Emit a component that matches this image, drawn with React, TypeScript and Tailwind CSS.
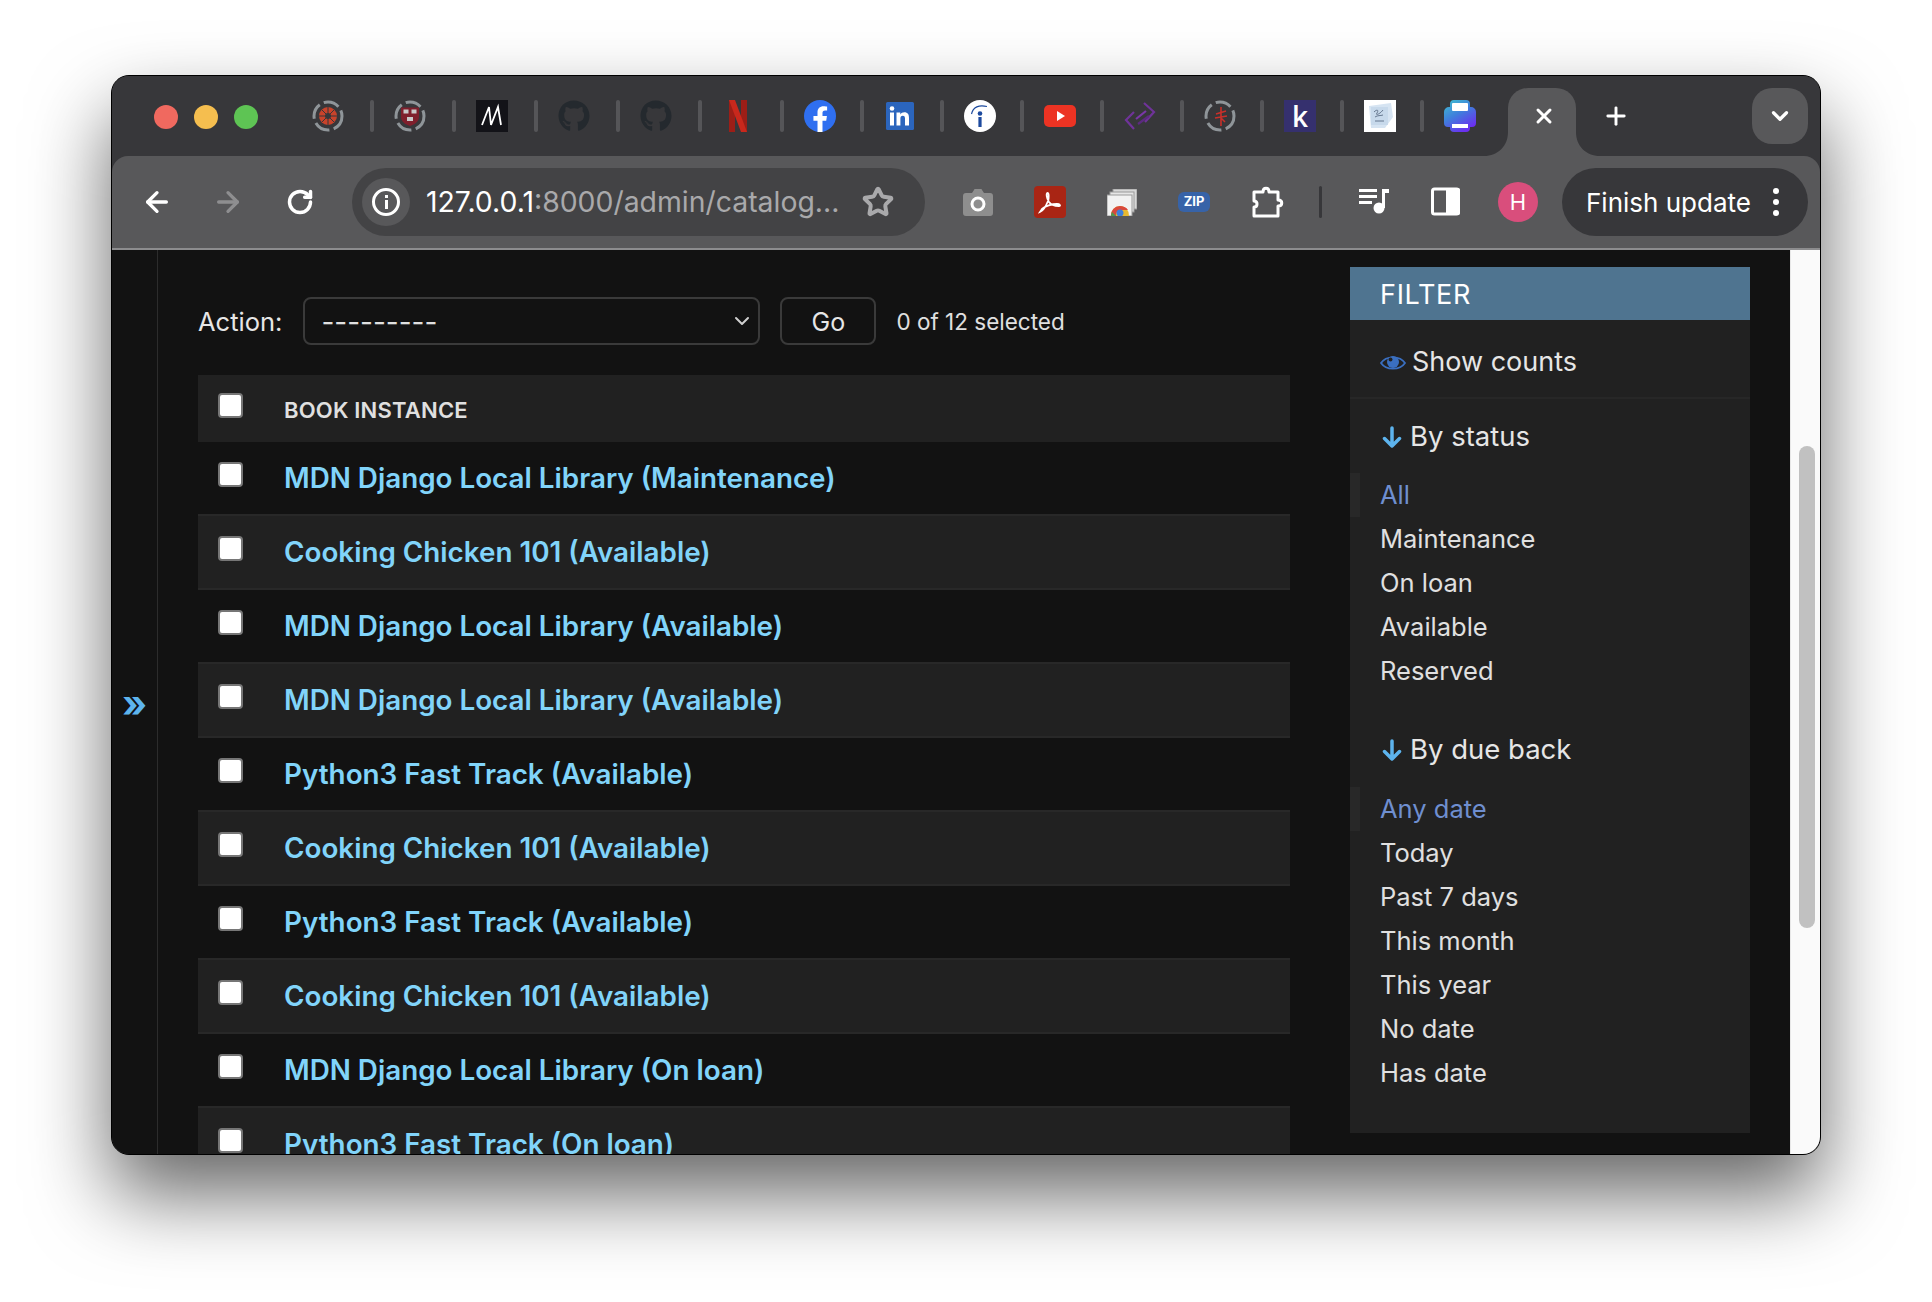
import { ArrowLeft, ArrowRight, ChevronDown, Plus, RotateCw, Star, X } from 'lucide-react';
import { FaGithub } from 'react-icons/fa';

const rows = [
  'MDN Django Local Library (Maintenance)',
  'Cooking Chicken 101 (Available)',
  'MDN Django Local Library (Available)',
  'MDN Django Local Library (Available)',
  'Python3 Fast Track (Available)',
  'Cooking Chicken 101 (Available)',
  'Python3 Fast Track (Available)',
  'Cooking Chicken 101 (Available)',
  'MDN Django Local Library (On loan)',
  'Python3 Fast Track (On loan)',
];

const statusFilters = ['All', 'Maintenance', 'On loan', 'Available', 'Reserved'];
const dueFilters = ['Any date', 'Today', 'Past 7 days', 'This month', 'This year', 'No date', 'Has date'];

function DashedRing() {
  return <circle cx="16" cy="16" r="14" fill="none" stroke="#8f9599" strokeWidth="3" strokeDasharray="16 4.4" />;
}

function CanvasIcon() {
  return (
    <svg width="32" height="32" viewBox="0 0 32 32">
      <DashedRing />
      <circle cx="16" cy="16" r="9" fill="#c8432b" />
      <circle cx="16" cy="16" r="3" fill="#37373a" />
      <path d="M16 7v18M7 16h18M9.6 9.6l12.8 12.8M22.4 9.6L9.6 22.4" stroke="#37373a" strokeWidth="1" />
    </svg>
  );
}

function HarvardIcon() {
  return (
    <svg width="32" height="32" viewBox="0 0 32 32">
      <DashedRing />
      <path d="M7 7.500h18v9c0 5-4 8-9 9.500-5-1.500-9-4.500-9-9.500z" fill="#7f1f2c" />
      <rect x="9.500" y="9.500" width="5" height="4" fill="#c9c9c9" />
      <rect x="17.500" y="9.500" width="5" height="4" fill="#c9c9c9" />
      <rect x="13" y="17" width="6" height="4" fill="#c9c9c9" />
    </svg>
  );
}

function MediumIcon() {
  return (
    <svg width="32" height="32" viewBox="0 0 32 32">
      <rect width="32" height="32" fill="#131318" />
      <path d="M6 25L13 7 15 25 22 7 25 25" fill="none" stroke="#fff" strokeWidth="1.800" />
    </svg>
  );
}

function NetflixIcon() {
  return (
    <svg width="32" height="32" viewBox="0 0 32 32">
      <path d="M7 0h6v32l-6 0z" fill="#9c1e17" />
      <path d="M19 0h6v32h-6z" fill="#9c1e17" />
      <path d="M7 0h6l12 32h-6z" fill="#c9281c" />
    </svg>
  );
}

function FacebookIcon() {
  return (
    <svg width="32" height="32" viewBox="0 0 24 24">
      <circle cx="12" cy="12" r="12" fill="#2f6ff0" />
      <path d="M16.670 15.560l.53-3.490h-3.330V9.810c0-.96.470-1.890 1.960-1.890h1.510V4.950s-1.380-.24-2.690-.24c-2.740 0-4.530 1.670-4.530 4.690v2.670H7.080v3.490h3.050V24h3.740v-8.440z" fill="#fff" />
    </svg>
  );
}

function LinkedinIcon() {
  return (
    <svg width="32" height="32" viewBox="0 0 32 32">
      <rect x="2" y="2" width="28" height="28" rx="1.500" fill="#2b65bd" />
      <rect x="6" y="12.500" width="4" height="13" fill="#fff" />
      <circle cx="8" cy="8.500" r="2.300" fill="#fff" />
      <path d="M12.500 12.500h3.800v2c.8-1.500 2.300-2.300 4-2.300 3.500 0 4.700 2.200 4.700 5.600v7.700h-4v-6.800c0-1.700-.5-2.900-2.200-2.900-1.800 0-2.400 1.300-2.400 3v6.700h-3.900z" fill="#fff" />
    </svg>
  );
}

function InfoLogoIcon() {
  return (
    <svg width="32" height="32" viewBox="0 0 32 32">
      <circle cx="16" cy="16" r="16" fill="#fff" />
      <circle cx="16" cy="13.500" r="2.300" fill="#1d4a9e" />
      <rect x="14.400" y="17" width="3.200" height="10" fill="#1d4a9e" />
      <path d="M7.500 14C9 7 15 4.500 23 6.500" fill="none" stroke="#1d4a9e" strokeWidth="1.200" />
    </svg>
  );
}

function YoutubeIcon() {
  return (
    <svg width="32" height="32" viewBox="0 0 32 32">
      <rect y="5" width="32" height="22" rx="5" fill="#ec3323" />
      <path d="M13 11l8 5-8 5z" fill="#fff" />
    </svg>
  );
}

function ArrowsIcon() {
  return (
    <svg width="32" height="32" viewBox="0 0 32 32" fill="none" stroke="#6f3399" strokeWidth="2.200">
      <path d="M10 12l-8 8 8 9" />
      <path d="M20 3l10 9-9 10" />
      <path d="M12 19l10-8" stroke="#7a37a8" />
      <path d="M14 24l11-8" stroke="#5c2a80" />
    </svg>
  );
}

function CardIcon() {
  return (
    <svg width="32" height="32" viewBox="0 0 32 32">
      <DashedRing />
      <path d="M17 7v19M12 14l10-3M11 18l12-2M17 18l4 4" fill="none" stroke="#c8302a" strokeWidth="1.600" />
    </svg>
  );
}

function SketchIcon() {
  return (
    <svg width="32" height="32" viewBox="0 0 32 32">
      <rect width="32" height="32" fill="#fff" />
      <path d="M5 6l22-3 2 14-8 11H7z" fill="#d6e4f2" />
      <rect x="7" y="7" width="17" height="18" fill="#c3d6e8" opacity="0.800" />
      <path d="M10 12c3-3 5-2 3 1s3 1 6-3M11 17c3-2 5-1 8-2M11 21h9" fill="none" stroke="#4e5f78" strokeWidth="0.800" />
    </svg>
  );
}

function PrinterIcon() {
  return (
    <svg width="32" height="32" viewBox="0 0 32 32">
      <defs>
        <linearGradient id="printerFill" x1="0" y1="0" x2="0.600" y2="1">
          <stop offset="0" stopColor="#3fc3cf" />
          <stop offset="0.500" stopColor="#3f7fdc" />
          <stop offset="1" stopColor="#6b2ff0" />
        </linearGradient>
      </defs>
      <path d="M6 4a4 4 0 0 1 4-4h12a4 4 0 0 1 4 4v3h1a5 5 0 0 1 5 5v11a4 4 0 0 1-4 4h-2v1a4 4 0 0 1-4 4H10a4 4 0 0 1-4-4v-1H4a4 4 0 0 1-4-4V12a5 5 0 0 1 5-5h1z" fill="url(#printerFill)" />
      <rect x="8" y="3" width="16" height="8" rx="1" fill="#fff" />
      <rect x="8" y="24" width="16" height="4" fill="#fff" />
    </svg>
  );
}

function CameraIcon() {
  return (
    <svg width="30" height="27" viewBox="0 0 30 27">
      <path d="M9 4l2-3a1 1 0 0 1 1-1h6a1 1 0 0 1 1 1l2 3h6a3 3 0 0 1 3 3v17a3 3 0 0 1-3 3H3a3 3 0 0 1-3-3V7a3 3 0 0 1 3-3z" fill="#8e8e8e" />
      <circle cx="15" cy="15" r="6" fill="none" stroke="#fff" strokeWidth="3" />
    </svg>
  );
}

function PdfIcon() {
  return (
    <svg width="32" height="32" viewBox="0 0 32 32">
      <rect width="32" height="32" rx="4" fill="#a92514" />
      <path d="M6 26c3-1 6-6 8-11 1-3 1-8-.5-8s-1 5 1.500 9c2 3 6 4 10 4 2 0 1-2-2-2-5 0-12 2-15 5z" fill="none" stroke="#fff" strokeWidth="1.800" />
    </svg>
  );
}

function WebStoreIcon() {
  return (
    <svg width="30" height="27" viewBox="0 0 30 27">
      <rect x="6" y="0" width="24" height="20" fill="#d8d8d8" stroke="#9a9a9a" />
      <rect x="3" y="3" width="24" height="20" fill="#e6e6e6" stroke="#9a9a9a" />
      <rect x="0" y="6" width="25" height="21" fill="#f2f2f2" stroke="#9a9a9a" />
      <path d="M4 27a9 9 0 0 1 9-10 9 9 0 0 1 9 10z" fill="#e8b930" />
      <path d="M4 27a9 9 0 0 1 9-10c3 0 6 1 8 4h-8a5 5 0 0 0-4 6z" fill="#d9483b" />
      <path d="M4 27a9 9 0 0 1 1-4l4 4z" fill="#4d9a4f" />
      <circle cx="13" cy="24" r="3.500" fill="#3f7fdc" />
    </svg>
  );
}

function PuzzleIcon() {
  return (
    <svg width="32" height="34" viewBox="0 0 32 34" fill="none" stroke="#fff" strokeWidth="3" strokeLinejoin="round">
      <path d="M2 8h9c0-5 6-5 6 0h9v8c5 0 5 6 0 6v10H2v-9c4 0 4-6 0-6z" />
    </svg>
  );
}

function QueueIcon() {
  return (
    <svg width="30" height="28" viewBox="0 0 30 28" fill="#fff">
      <rect y="1" width="18" height="3" />
      <rect y="7" width="18" height="3" />
      <rect y="13" width="13" height="3" />
      <rect x="23" y="1" width="3" height="19" />
      <rect x="23" y="1" width="7" height="4" />
      <circle cx="20" cy="20" r="5.500" />
    </svg>
  );
}

function SidePanelIcon() {
  return (
    <svg width="30" height="29" viewBox="0 0 30 29">
      <rect x="2.500" y="2" width="26" height="25" rx="2" fill="none" stroke="#fff" strokeWidth="3" />
      <rect x="16" y="1" width="14" height="27" rx="2" fill="#fff" />
    </svg>
  );
}

function EyeIcon() {
  return (
    <svg width="26" height="18" viewBox="0 0 26 18">
      <path d="M1 9C6 1.500 20 1.500 25 9 20 16.500 6 16.500 1 9z" fill="none" stroke="#3a6fc0" strokeWidth="1.800" />
      <circle cx="13" cy="8" r="6" fill="#3a6fc0" />
      <circle cx="10.500" cy="5.500" r="2" fill="#212121" />
    </svg>
  );
}

function DownArrow() {
  return (
    <svg width="20" height="22" viewBox="0 0 20 22" fill="none" stroke="#5db4ee" strokeWidth="3.500" strokeLinecap="round" strokeLinejoin="round">
      <path d="M10 2v18M2.500 12.500L10 20l7.500-7.500" />
    </svg>
  );
}

function Flare({ side }: { side: 'left' | 'right' }) {
  return (
    <svg
      width="24"
      height="24"
      viewBox="0 0 24 24"
      className={side === 'left' ? 'absolute bottom-0 -left-[24px]' : 'absolute bottom-0 -right-[24px] -scale-x-100'}
    >
      <path d="M24 0v24H0C14 24 24 14 24 0z" fill="#58585a" />
    </svg>
  );
}

function TabFavicon({ children, spaced }: { children: React.ReactNode; spaced: string }) {
  return (
    <div className={`flex items-center ${spaced}`}>
      <div className="w-8 h-8 flex items-center justify-center">{children}</div>
      <div className="ml-auto w-1 h-8 rounded-sm bg-[#555558]" />
    </div>
  );
}

function TabStrip() {
  return (
    <div className="h-[80px] flex items-start bg-[#37373a] pl-[42px]">
      <div className="flex gap-4 mt-[29px]">
        <div className="w-6 h-6 rounded-full bg-[#f0695f]" />
        <div className="w-6 h-6 rounded-full bg-[#f5be4f]" />
        <div className="w-6 h-6 rounded-full bg-[#5ec454]" />
      </div>
      <div className="flex items-center ml-[54px] mt-6">
        <TabFavicon spaced="w-[62px] mr-5"><CanvasIcon /></TabFavicon>
        <TabFavicon spaced="w-[62px] mr-5"><HarvardIcon /></TabFavicon>
        <TabFavicon spaced="w-[62px] mr-5"><MediumIcon /></TabFavicon>
        <TabFavicon spaced="w-[62px] mr-5"><FaGithub size={32} color="#24292e" /></TabFavicon>
        <TabFavicon spaced="w-[62px] mr-5"><FaGithub size={32} color="#24292e" /></TabFavicon>
        <TabFavicon spaced="w-[62px] mr-5"><NetflixIcon /></TabFavicon>
        <TabFavicon spaced="w-[60px] mr-5"><FacebookIcon /></TabFavicon>
        <TabFavicon spaced="w-[60px] mr-5"><LinkedinIcon /></TabFavicon>
        <TabFavicon spaced="w-[60px] mr-5"><InfoLogoIcon /></TabFavicon>
        <TabFavicon spaced="w-[60px] mr-5"><YoutubeIcon /></TabFavicon>
        <TabFavicon spaced="w-[60px] mr-5"><ArrowsIcon /></TabFavicon>
        <TabFavicon spaced="w-[60px] mr-5"><CardIcon /></TabFavicon>
        <TabFavicon spaced="w-[60px] mr-5">
          <div className="w-8 h-8 bg-[#35306e] flex items-center justify-center text-white text-[28px] font-semibold font-['Open_Sans',sans-serif]">k</div>
        </TabFavicon>
        <TabFavicon spaced="w-[60px] mr-5"><SketchIcon /></TabFavicon>
        <div className="w-8 h-8"><PrinterIcon /></div>
      </div>
      <div className="relative w-[68px] h-[68px] mt-3 ml-8 bg-[#58585a] rounded-t-[20px] flex items-center justify-center pb-3 pl-[3px]">
        <Flare side="left" />
        <Flare side="right" />
        <X size={24} color="#fff" strokeWidth={3} />
      </div>
      <Plus size={28} color="#fff" strokeWidth={2.5} className="ml-[26px] mt-[26px]" />
      <div className="w-14 h-14 mt-3 ml-[122px] rounded-[20px] bg-[#58585a] flex items-center justify-center">
        <ChevronDown size={26} color="#fff" strokeWidth={3} />
      </div>
    </div>
  );
}

function Toolbar() {
  return (
    <div className="h-[94px] flex items-start pt-3 pl-[29px] bg-[#58585a] rounded-t-[16px] border-b-2 border-[#8c8c8e]">
      <ArrowLeft size={32} color="#fff" strokeWidth={2.500} className="mt-[18px]" />
      <ArrowRight size={32} color="#8e8e90" strokeWidth={2.500} className="mt-[18px] ml-[39px]" />
      <RotateCw size={28} color="#fff" strokeWidth={3} className="mt-5 ml-[42px]" />
      <div className="w-[573px] h-[68px] ml-[38px] rounded-full bg-[#434345] flex items-center pl-[10px]">
        <div className="w-12 h-12 rounded-full bg-[#58585a] flex items-center justify-center">
          <div className="relative w-7 h-7 rounded-full border-[3px] border-white flex flex-col items-center justify-center gap-[2px]">
            <div className="w-[3px] h-[3px] bg-white" />
            <div className="w-[3px] h-[9px] bg-white" />
          </div>
        </div>
        <div className="ml-[16px] w-[413px] text-[28.4px] leading-none whitespace-nowrap font-['Inter',sans-serif] text-[#a9a9ab]">
          <span className="text-white">127.0.0.1</span>:8000/admin/catalog...
        </div>
        <Star size={32} color="#a9a9ab" strokeWidth={3} className="ml-[23px]" />
      </div>
      <div className="mt-[21px] ml-[38px]"><CameraIcon /></div>
      <div className="mt-[18px] ml-[41px]"><PdfIcon /></div>
      <div className="mt-[21px] ml-[41px]"><WebStoreIcon /></div>
      <div className="mt-6 ml-[41px] w-8 h-5 rounded-md bg-[#3763a8] flex items-center justify-center text-white text-[13px] font-bold font-['Inter',sans-serif]">ZIP</div>
      <div className="mt-4 ml-[42px]"><PuzzleIcon /></div>
      <div className="mt-[18px] ml-[35px] w-[3px] h-8 rounded-sm bg-[#37373a]" />
      <div className="mt-5 ml-[37px]"><QueueIcon /></div>
      <div className="mt-[19px] ml-[41px]"><SidePanelIcon /></div>
      <div className="mt-[14px] ml-[38px] w-10 h-10 rounded-full bg-[#d94e7c] flex items-center justify-center text-white text-[22px] font-['Inter',sans-serif]">H</div>
      <div className="w-[246px] h-[68px] ml-6 rounded-full bg-[#37373a] flex items-center pl-[24px] text-white text-[26px] font-['Inter',sans-serif] whitespace-nowrap">
        Finish update
        <div className="ml-[22px] flex flex-col gap-[5px]">
          <div className="w-[6px] h-[6px] rounded-full bg-white" />
          <div className="w-[6px] h-[6px] rounded-full bg-white" />
          <div className="w-[6px] h-[6px] rounded-full bg-white" />
        </div>
      </div>
    </div>
  );
}

function ChangeList() {
  return (
    <div className="w-[1092px] ml-10 shrink-0">
      <div className="flex items-start h-[48px] mt-[47px]">
        <span className="text-[25.5px] leading-[50px] text-[#e6e6e6]">Action:</span>
        <div className="relative w-[457px] h-[48px] ml-[21px] border-2 border-[#3a3a3a] rounded-lg pl-[16px] text-[28px] leading-[46px] text-[#e0e0e0]">
          ---------
          <ChevronDown size={24} color="#cfcfcf" strokeWidth={2} className="absolute right-[4px] top-[10px]" />
        </div>
        <div className="w-[96px] h-[48px] ml-5 border-2 border-[#3a3a3a] rounded-lg text-center text-[25px] leading-[46px] text-[#e6e6e6]">Go</div>
        <span className="ml-5 text-[22.500px] leading-[50px] text-[#e0e0e0]">0 of 12 selected</span>
      </div>
      <div className="mt-[30px]">
        <div className="h-[67px] bg-[#212121] flex items-start pl-5 pt-[18px]">
          <input type="checkbox" className="appearance-none w-[25px] h-[25px] bg-white border-2 border-[#767676] rounded-[4px]" />
          <span className="ml-[41px] mt-[1px] text-[22px] tracking-[0.200px] font-semibold text-[#e0e0e0]">BOOK INSTANCE</span>
        </div>
        {rows.map((title, i) => (
          <div
            key={i}
            className={`flex items-start pl-5 ${i === 0 ? 'h-[72px] pt-5' : 'h-[74px] pt-[20px] border-t-2 border-[#282828]'} ${i % 2 === 1 ? 'bg-[#212121]' : 'bg-[#121212]'}`}
          >
            <input type="checkbox" className="appearance-none w-[25px] h-[25px] bg-white border-2 border-[#767676] rounded-[4px]" />
            <span className="ml-[41px] text-[27.800px] leading-[32px] font-semibold text-[#81d4fa] whitespace-nowrap">{title}</span>
          </div>
        ))}
      </div>
    </div>
  );
}

function FilterGroup({ title, items, listGap }: { title: string; items: string[]; listGap: string }) {
  return (
    <div>
      <div className="flex items-center h-9 pl-[32px]">
        <DownArrow />
        <span className="ml-[8px] text-[27.500px] text-[#e6e6e6]">{title}</span>
      </div>
      <ul className={listGap}>
        {items.map((item, i) => (
          <li key={item} className={`h-[44px] flex items-center text-[25.500px] ${i === 0 ? 'text-[#6f8fd0] border-l-[10px] border-[#282828] pl-[20px]' : 'pl-[30px] text-[#e0e0e0]'}`}>
            {item}
          </li>
        ))}
      </ul>
    </div>
  );
}

function FilterPanel() {
  return (
    <div className="w-[400px] h-[866px] ml-[60px] mt-[17px] shrink-0 bg-[#212121]">
      <div className="h-[53px] bg-[#4f7490] flex items-center pl-[30px] pt-[3px] text-[27px] text-white tracking-[0.700px]">FILTER</div>
      <div className="h-[79px] flex items-center pl-[30px] pt-[8px] border-b-2 border-[#272727]">
        <EyeIcon />
        <span className="ml-[6px] text-[27px] text-[#e6e6e6]">Show counts</span>
      </div>
      <div className="mt-5">
        <FilterGroup title="By status" items={statusFilters} listGap="mt-[18px]" />
      </div>
      <div className="mt-[39px]">
        <FilterGroup title="By due back" items={dueFilters} listGap="mt-[19px]" />
      </div>
    </div>
  );
}

export default function App() {
  return (
    <div className="w-[1932px] h-[1302px] overflow-hidden bg-white pl-[111px] pt-[75px] font-['Inter',sans-serif]">
      <div className="w-[1710px] h-[1080px] rounded-[18px] border border-black overflow-hidden flex flex-col bg-[#37373a] shadow-[0_40px_80px_rgba(0,0,0,0.6)]">
        <TabStrip />
        <Toolbar />
        <div className="flex-1 min-h-0 flex bg-[#121212] overflow-hidden">
          <div className="w-[46px] shrink-0 border-r border-[#2c2c2c] flex items-center justify-center pt-[2px] text-[#5db4ee] text-[38px] font-bold leading-none">»</div>
          <ChangeList />
          <FilterPanel />
          <div className="flex-1 ml-[40px] bg-[#fafafa] border-l border-[#e8e8e8] pt-[196px] pl-[8px]">
            <div className="w-4 h-[482px] rounded-full bg-[#c1c1c1]" />
          </div>
        </div>
      </div>
    </div>
  );
}
